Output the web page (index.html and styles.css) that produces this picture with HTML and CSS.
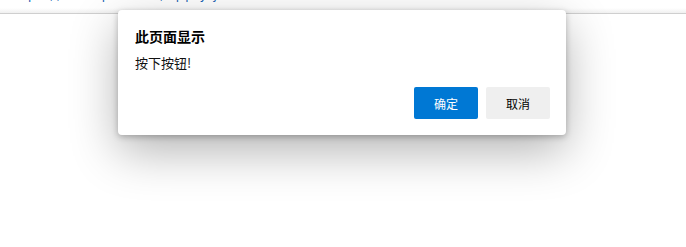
FILE: index.html
```html
<!DOCTYPE html>
<html lang="zh">
<head>
<meta charset="utf-8">
<link rel="stylesheet" href="styles.css">
</head>
<body>
<div class="page">
  <div class="topbar"><span class="cut">https://example.com/apply.js</span></div>
</div>
<div class="dialog">
  <div class="title">此页面显示</div>
  <div class="msg">按下按钮!</div>
  <div class="actions">
    <button class="btn primary">确定</button>
    <button class="btn secondary">取消</button>
  </div>
</div>
</body>
</html>
```
FILE: styles.css
```css
html, body {
  margin: 0;
  padding: 0;
  background: #ffffff;
  width: 686px;
  height: 247px;
  overflow: hidden;
  font-family: "Noto Sans CJK SC", "Noto Sans", sans-serif;
}
.page {
  width: 100%;
}
.topbar {
  height: 13px;
  border-bottom: 1px solid #cfcfcf;
  background: linear-gradient(#ffffff 0, #ffffff 8px, #f0f0f0 13px);
  overflow: hidden;
}
.cut {
  display: block;
  margin-top: -13px;
  padding-left: 6px;
  font-size: 12px;
  line-height: 14px;
  color: #1a5fb4;
  letter-spacing: 2px;
}
.dialog {
  position: absolute;
  left: 118px;
  top: 10px;
  width: 448px;
  box-sizing: border-box;
  padding: 16px 16px 16px 17px;
  background: #ffffff;
  border-radius: 4px;
  box-shadow: 0 16px 48px rgba(0,0,0,0.3), 0 2px 6px rgba(0,0,0,0.25);
}
.title {
  font-size: 14px;
  font-weight: 700;
  line-height: 20px;
  color: #000000;
}
.msg {
  margin-top: 8px;
  font-size: 13px;
  line-height: 18px;
  color: #111111;
}
.actions {
  margin-top: 15px;
  display: flex;
  justify-content: flex-end;
  gap: 8px;
}
.btn {
  width: 64px;
  height: 32px;
  border: none;
  border-radius: 2px;
  font-family: "Noto Sans CJK SC", "Noto Sans", sans-serif;
  font-size: 12px;
  padding: 0;
}
.primary {
  background: #0078d4;
  color: #ffffff;
}
.secondary {
  background: #efefef;
  color: #000000;
}
```
